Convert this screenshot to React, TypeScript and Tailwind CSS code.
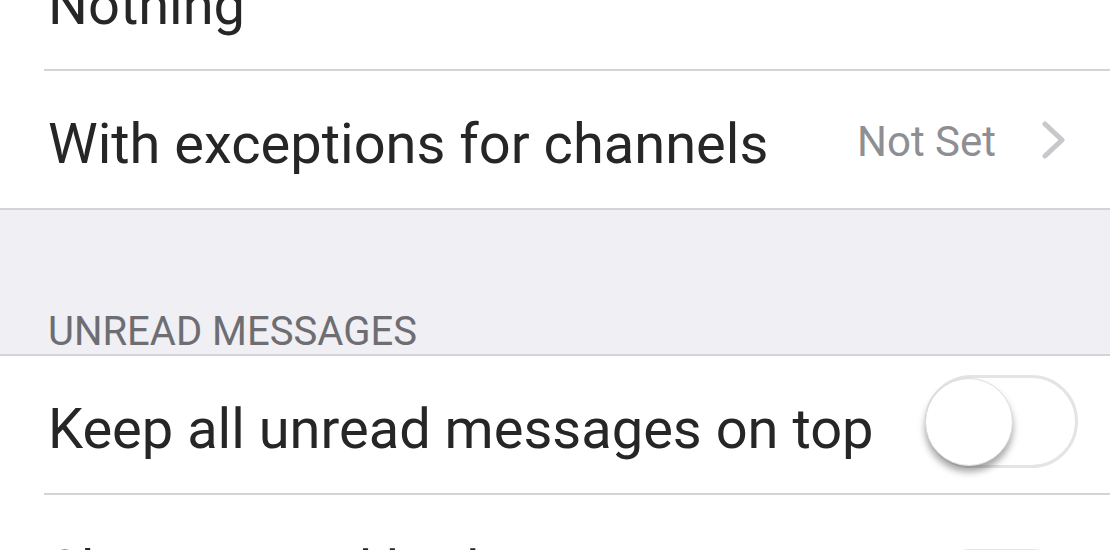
import React from "react";

const Toggle = () => (
  <div className="w-[153px] h-[93px] rounded-full border-[3px] border-[#e4e4e6] bg-white flex items-center shrink-0">
    <div className="-ml-[3px] w-[88px] h-[88px] rounded-full bg-white border border-[#dcdcdc] shadow-[0_6px_7px_rgba(0,0,0,0.35)]" />
  </div>
);

const App = () => {
  return (
    <div
      className="w-[1110px] h-[550px] overflow-hidden bg-white text-[#262626]"
      style={{ fontFamily: "Roboto, 'Noto Sans', sans-serif" }}
    >
      <div className="-mt-[68px]">
        {/* notification level group */}
        <div className="ml-[44px] h-[139px] border-b-2 border-[#d4d4d8] flex items-center pl-[4px]">
          <span className="pt-[8px] text-[56px] leading-none">Nothing</span>
        </div>
        <div className="h-[139px] border-b-2 border-[#d4d4d8] flex items-center justify-between pl-[48px] pr-[43px]">
          <span className="pt-[8px] text-[56px] leading-none">With exceptions for channels</span>
          <div className="flex items-center gap-[45px]">
            <span className="pt-[4px] text-[42px] leading-none text-[#8e8e93]">Not Set</span>
            <svg width="26" height="38" viewBox="0 0 26 38" fill="none">
              <path d="M4 3 L21 19 L4 35" stroke="#c7c7cc" strokeWidth="5" strokeLinecap="round" strokeLinejoin="round" />
            </svg>
          </div>
        </div>

        {/* section header */}
        <div className="h-[146px] bg-[#efeff4] border-b-2 border-[#d4d4d8] flex items-end pl-[48px] pb-[2px]">
          <span className="text-[40px] leading-none text-[#6d6d72]">UNREAD MESSAGES</span>
        </div>

        {/* unread group */}
        <div className="ml-[44px] h-[139px] border-b-2 border-[#d4d4d8] flex items-center justify-between pl-[4px] pr-[32px]">
          <span className="pt-[9px] text-[56px] leading-none">Keep all unread messages on top</span>
          <div className="mb-[6px]">
            <Toggle />
          </div>
        </div>
        <div className="ml-[44px] h-[201px] flex items-center justify-between pl-[4px] pr-[32px]">
          <div className="self-start pt-[48px] flex flex-col gap-3">
            <span className="text-[56px] leading-none">Show unread badge</span>
            <span className="text-[40px] leading-none text-[#8e8e93]">Display a count next to each channel</span>
          </div>
          <Toggle />
        </div>
      </div>
    </div>
  );
};

export default App;
